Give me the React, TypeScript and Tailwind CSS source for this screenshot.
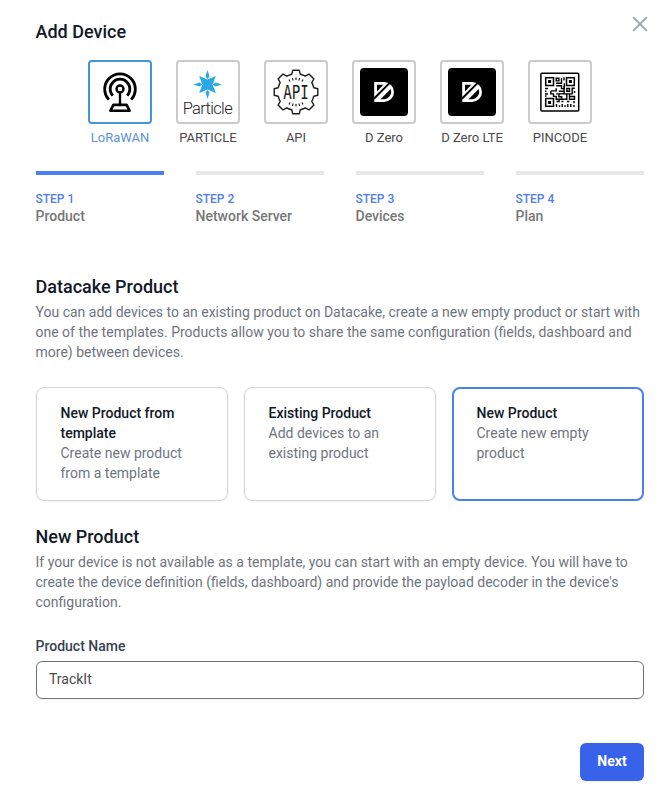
import React, { useState } from "react";

function LoraIcon() {
  return (
    <svg viewBox="0 0 60 60" className="h-[60px] w-[60px]" fill="none" stroke="#000" strokeWidth="2.8">
      <circle cx="30" cy="27" r="3.5" strokeWidth="2.4" />
      <path d="M22.8 33.6a9.8 9.8 0 1 1 14.4 0" />
      <path d="M18.8 37.6a15.3 15.3 0 1 1 22.4 0" />
      <path d="M30 31v12.5" strokeWidth="2.4" />
      <path d="M23.4 42.9h13.2l3 5.9H20.4z" strokeWidth="2.6" strokeLinejoin="round" />
    </svg>
  );
}

function ParticleIcon() {
  return (
    <svg viewBox="0 0 60 60" className="h-[60px] w-[60px]">
      <g transform="translate(29.5 22.5)" fill="#29a8e8">
        <path d="M-8.4-8.4 0-5 8.4-8.4 5 0 8.4 8.4 0 5-8.4 8.4-5 0z" />
        <path d="M0-14.5 2-8 0-5.4-2-8zM0 14.5 2 8 0 5.4-2 8zM-14.3 0-8-2-5.4 0-8 2zM14.3 0 8-2 5.4 0 8 2z" />
      </g>
      <text x="4.7" y="51.8" fontFamily="Roboto, sans-serif" fontWeight="300" fontSize="16.5" fill="#222" textLength="50" lengthAdjust="spacing">
        Particle
      </text>
    </svg>
  );
}

function ApiIcon() {
  return (
    <svg viewBox="0 0 60 60" className="h-[60px] w-[60px]" fill="none" stroke="#1c1c1c" strokeWidth="1.4" strokeLinejoin="round">
      <g transform="translate(30 30)">
        <path d="M-3.2-21.8H3.2L4.2-17.8Q7.5-17 9.3-15.8L13-17.9 17.9-13 15.8-9.3Q17.1-7 17.8-4.2L21.8-3.2V3.2L17.8 4.2Q17.1 7 15.8 9.3L17.9 13 13 17.9 9.3 15.8Q7 17.1 4.2 17.8L3.2 21.8H-3.2L-4.2 17.8Q-7 17.1-9.3 15.8L-13 17.9-17.9 13-15.8 9.3Q-17.1 7-17.8 4.2L-21.8 3.2V-3.2L-17.8-4.2Q-17.1-7-15.8-9.3L-17.9-13-13-17.9-9.3-15.8Q-7-17.1-4.2-17.8Z" />
        <path d="M0-14.5v2.6M-3.5-14l.5 2.5M3.5-14l-.5 2.5M-7-12.4l1 2M7-12.4l-1 2M0 14.5v-2.6M-3.5 14l.5-2.5M3.5 14l-.5-2.5M-7 12.4l1-2M7 12.4l-1-2" strokeWidth="1.2" />
      </g>
      <text x="17.2" y="37.4" fontFamily="'DejaVu Sans Mono', monospace" fontSize="19.5" fill="#1c1c1c" stroke="none" textLength="25.6" lengthAdjust="spacingAndGlyphs">
        API
      </text>
    </svg>
  );
}

function DZeroIcon() {
  return (
    <svg viewBox="0 0 48 48" className="h-12 w-12">
      <rect width="48" height="48" rx="4" fill="#000" />
      <path d="M14.2 14H24a10 10 0 0 1 0 20h-9.8z" fill="#fff" />
      <path d="M17 16.8h6.4l-6.4 6.6z" fill="#000" />
      <path d="M13.4 31.2 30.2 14.4" stroke="#000" strokeWidth="2" />
      <path d="M20.6 31.2 30.6 21Q32.6 26.8 27.6 30 25.6 31.2 23.6 31.2z" fill="#000" />
    </svg>
  );
}

function QrIcon() {
  return (
    <svg viewBox="0 0 60 60" className="h-[60px] w-[60px]" fill="none" stroke="#000">
      <rect x="10.9" y="11.2" width="37.8" height="37.8" rx="1" strokeWidth="1.5" />
      <g strokeWidth="1.5">
        <rect x="15.7" y="15.7" width="7.8" height="7.8" />
        <rect x="36.5" y="15.7" width="7.8" height="7.8" />
        <rect x="15.7" y="36.5" width="7.8" height="7.8" />
      </g>
      <g fill="#000" stroke="none">
        <path d="M18.1 18.1h3v3h-3zM38.9 18.1h3v3h-3zM18.1 38.9h3v3h-3z" />
      </g>
      <g strokeWidth="1.4">
        <path d="M26.2 16.2h2.7v2.7h-2.7zM31.5 16v5.3h-5.5M34 15.3v3.2M26.2 23.8h5.3v2.8h2.8v-5.3" />
        <path d="M15 26.5h3M15 29.2h1.5M15 32h3M15 34h1.5M20.8 28.9h5.4v-2.6M20.8 28.9v3h2.7v2.5h2.7v2.9h5.4v-2.6h-2.7v-2.8h-2.7M28.8 29.2h5.3v-5.3M34.1 29.2v2.7h-5.3M34.1 31.9h2.7v5.3h-5.2" />
        <path d="M36.8 26.5h2.7v2.7h-2.7zM42.2 25.6v6.3h-5.4M42.2 26.3h2.6M39.5 34.5h5v2.7h-5zM39.5 34.5v-2.6M26.5 39.5h2.6v-2.3M44.5 29v2M31.5 39.5h2M36.8 39.5h2.5" />
        <path d="M26.5 42v3M29.5 43.3v1.7M32.2 42v3M35 43.3v1.7M37.8 42v3M40.8 42v3M44 39v2.3M44 43v2" />
      </g>
    </svg>
  );
}

const kinds = [
  { name: "LoRaWAN", icon: <LoraIcon /> },
  { name: "PARTICLE", icon: <ParticleIcon /> },
  { name: "API", icon: <ApiIcon /> },
  { name: "D Zero", icon: <DZeroIcon /> },
  { name: "D Zero LTE", icon: <DZeroIcon /> },
  { name: "PINCODE", icon: <QrIcon /> },
];

const steps = ["Product", "Network Server", "Devices", "Plan"];

const options = [
  { title: "New Product from template", text: "Create new product from a template" },
  { title: "Existing Product", text: "Add devices to an existing product" },
  { title: "New Product", text: "Create new empty product" },
];

export default function App() {
  const [kind, setKind] = useState(0);
  const [option, setOption] = useState(2);
  const [name, setName] = useState("TrackIt");

  return (
    <main className="h-[792px] w-[666px] bg-white pt-[18px] pr-[22px] pl-9 font-['Roboto',sans-serif] text-sm text-[#6f747e]">
      <header className="flex h-7 items-start justify-between">
        <h1 className="-ml-[0.5px] text-lg font-medium text-[#111827]">Add Device</h1>
        <button aria-label="Close" className="-mt-[6px] -mr-2">
          <svg viewBox="0 0 24 24" className="h-6 w-6" fill="none" stroke="#9ca3af" strokeWidth="1.9" strokeLinecap="round">
            <path d="M5.7 5.7l12.6 12.6M18.3 5.7l-12.6 12.6" />
          </svg>
        </button>
      </header>

      <div className="mt-3.5 flex justify-center gap-6">
        {kinds.map((k, i) => (
          <button key={k.name} onClick={() => setKind(i)} className="flex w-16 flex-col items-center">
            <span className={`flex h-16 w-16 items-center justify-center rounded border-2 ${i === kind ? "border-[#4496dc]" : "border-[#cbcbcb]"}`}>
              {k.icon}
            </span>
            <span className={`mt-1 text-[13px] leading-5 whitespace-nowrap ${i === kind ? "text-[#5b92e0]" : "text-[#4a4a4a]"}`}>{k.name}</span>
          </button>
        ))}
      </div>

      <ol className="mt-[23px] grid grid-cols-4 gap-8">
        {steps.map((s, i) => (
          <li key={s} className={`border-t-4 pt-4 font-medium ${i === 0 ? "border-[#4880f4]" : "border-[#e5e7eb]"}`}>
            <div className="-ml-[0.5px] text-xs text-[#4f7df3]">STEP {i + 1}</div>
            <div className="-mt-px -ml-[0.5px] leading-5 text-[#777]">{s}</div>
          </li>
        ))}
      </ol>

      <h2 className="mt-[47px] -ml-[0.5px] text-lg font-medium text-[#111827]">Datacake Product</h2>
      <p className="mt-px -ml-[0.5px] leading-5">
        You can add devices to an existing product on Datacake, create a new empty product or start with one of the templates. Products allow you to share the same configuration (fields, dashboard and more) between devices.
      </p>

      <div className="mt-[25px] grid grid-cols-3 gap-4">
        {options.map((o, i) => (
          <button
            key={o.title}
            onClick={() => setOption(i)}
            className={`flex h-[114px] flex-col rounded-lg text-left leading-5 ${i === option ? "border-2 border-[#4880f4] px-[22.5px] py-3.5" : "border border-[#d1d5db] px-[23.5px] py-[15px] shadow-xs"}`}
          >
            <span className="font-medium text-[#111827]">{o.title}</span>
            <span>{o.text}</span>
          </button>
        ))}
      </div>

      <h2 className="mt-[22px] -ml-[0.5px] text-lg font-medium text-[#111827]">New Product</h2>
      <p className="mt-px -ml-[0.5px] leading-5">
        If your device is not available as a template, you can start with an empty device. You will have to create the device definition (fields, dashboard) and provide the payload decoder in the device's configuration.
      </p>

      <label className="mt-6 block leading-5 font-medium text-[#374151]">
        <span className="-ml-[0.5px]">Product Name</span>
        <input
          value={name}
          onChange={(e) => setName(e.target.value)}
          className="mt-[5px] block h-[38px] w-full rounded-md border border-[#6b7280] px-3 pb-[2px] font-normal text-[#4a4a4a] shadow-xs outline-none"
        />
      </label>

      <div className="mt-11 flex justify-end">
        <button className="h-[38px] w-16 rounded-md bg-[#3862e9] pb-0.5 text-sm font-bold text-white shadow-xs">Next</button>
      </div>
    </main>
  );
}
